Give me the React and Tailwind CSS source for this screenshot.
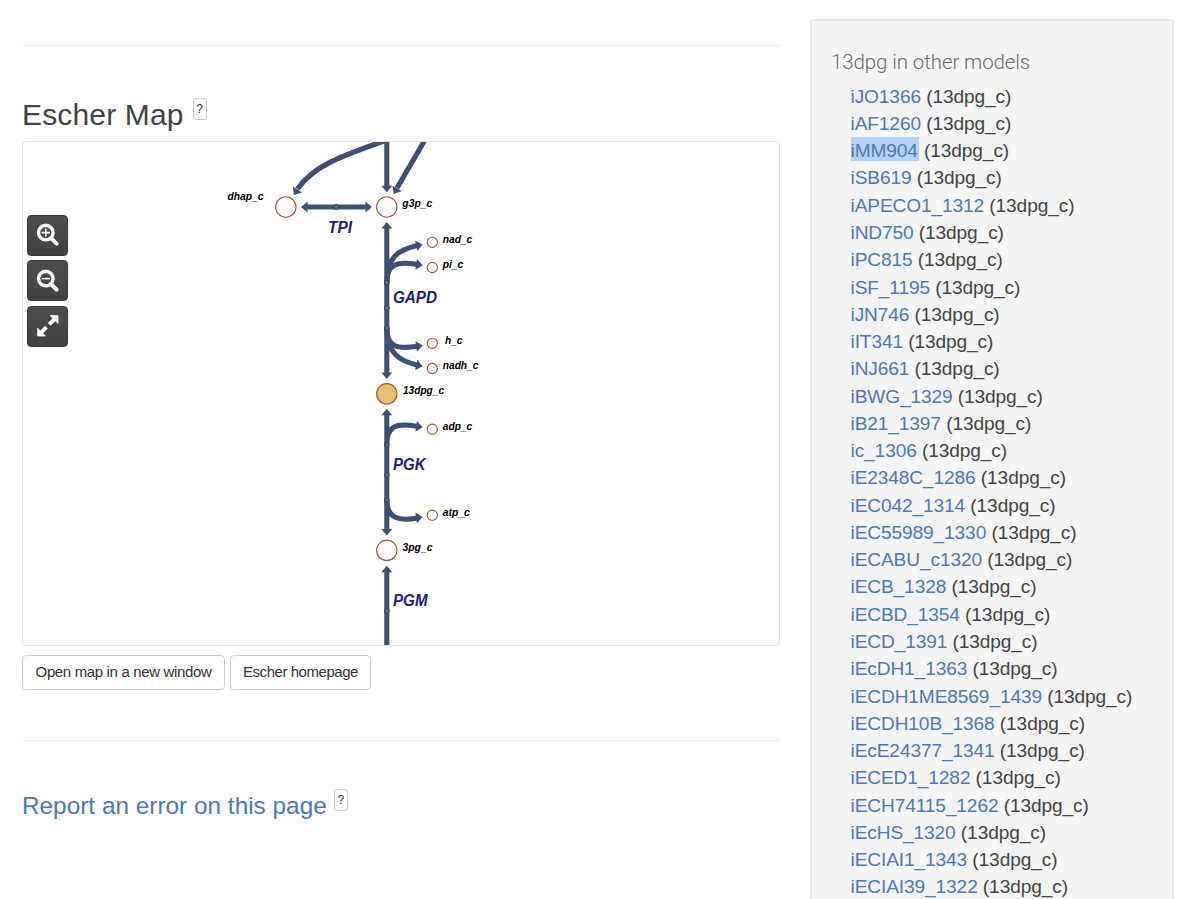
import React from 'react';

const models = [
  'iJO1366', 'iAF1260', 'iMM904', 'iSB619', 'iAPECO1_1312', 'iND750', 'iPC815', 'iSF_1195',
  'iJN746', 'iIT341', 'iNJ661', 'iBWG_1329', 'iB21_1397', 'ic_1306', 'iE2348C_1286',
  'iEC042_1314', 'iEC55989_1330', 'iECABU_c1320', 'iECB_1328', 'iECBD_1354', 'iECD_1391',
  'iEcDH1_1363', 'iECDH1ME8569_1439', 'iECDH10B_1368', 'iEcE24377_1341', 'iECED1_1282',
  'iECH74115_1262', 'iEcHS_1320', 'iECIAI1_1343', 'iECIAI39_1322',
];

const primaryNodes = [
  { x: 285.8, y: 207 },
  { x: 386.8, y: 207 },
  { x: 386.8, y: 393.8, active: true },
  { x: 386.8, y: 550.3 },
];

const secondaryNodes = [[432.3, 242.3], [432.3, 267.5], [432.3, 343.3], [432.3, 368.5], [432.3, 429.2], [432.3, 515.2]];

const markers = [[336.3, 207], [386.8, 282.7], [386.8, 308], [386.8, 328.2], [386.8, 444.5], [386.8, 474.8], [386.8, 500], [386.8, 611]];

// x, y, rotation (0 points right)
const arrows = [
  [294, 194.8, 123], [386.8, 192, 90], [394, 193.8, 120],
  [301.3, 207, 180], [371.7, 207, 0],
  [386.8, 222.3, -90], [422.4, 244.5, -12], [422.4, 265.3, 8],
  [422.4, 345.5, -8], [422.4, 366.3, 12], [386.8, 378.7, 90],
  [386.8, 409, -90], [422.4, 427.3, 8], [422.4, 517, -8], [386.8, 535.3, 90],
  [386.8, 566, -90],
];

const metabolites = [
  ['dhap_c', 227.5, 199.7, 36], ['g3p_c', 402.3, 207.3, 30], ['nad_c', 442.8, 242.8, 29.5], ['pi_c', 442.8, 268, 20.5],
  ['h_c', 445, 343.7, 17.5], ['nadh_c', 442.8, 369, 35.5], ['13dpg_c', 403, 394.3, 41],
  ['adp_c', 442.8, 429.7, 29.5], ['atp_c', 442.8, 515.7, 27], ['3pg_c', 402.5, 550.8, 30],
];

const reactions = [['TPI', 328, 232.8, 24], ['GAPD', 393, 303, 44], ['PGK', 393, 469.7, 32.5], ['PGM', 393, 606.2, 34.5]];

function EscherMap() {
  return (
    <svg className="block h-full w-full" viewBox="23 142 756 503" fontFamily="Liberation Sans, Arial, sans-serif" fontWeight="bold" fontStyle="italic">
      <g fill="none" stroke="#3f4f76" strokeWidth="5.1">
        <path d="M386.8 140C341 156 313 166 297.5 189" />
        <path d="M386.8 138V187M425.5 139L397 188M306 207H367" />
        <path d="M386.8 227V374M386.8 282.7C386.8 257 398 250 417.5 245.5" />
        <path d="M386.8 282.7C386.8 264 397 261 417.5 264.5" />
        <path d="M386.8 328.2C386.8 347 397 349.5 417.5 346.3" />
        <path d="M386.8 328.2C386.8 354 400 361 417.5 365.2" />
        <path d="M386.8 414V531M386.8 444.5C386.8 426 396 422.5 417.5 426.5" />
        <path d="M386.8 500C386.8 518 398 521.5 417.5 518M386.8 571V648" />
      </g>
      <g fill="#3f4f76">
        {arrows.map(([x, y, r], i) => (
          <path key={i} d="M0.3 0L-6.3 -5.4V5.4Z" transform={`translate(${x} ${y}) rotate(${r})`} />
        ))}
      </g>
      <g fill="#5b6783" stroke="#363b49" strokeWidth="1">
        {markers.map(([x, y], i) => <circle key={i} cx={x} cy={y} r="2.4" />)}
      </g>
      <g stroke="#a6562f" strokeWidth="1.1">
        {primaryNodes.map((n, i) => (
          <circle key={i} cx={n.x} cy={n.y} r="10.2" fill={n.active ? '#e4c073' : '#fff'} />
        ))}
        {secondaryNodes.map(([x, y], i) => <circle key={i} cx={x} cy={y} r="5.1" fill="#fff" />)}
      </g>
      <g fontSize="10.1" fill="#000">
        {metabolites.map(([name, x, y, w]) => (
          <text key={name} x={x} y={y} textLength={w} lengthAdjust="spacingAndGlyphs">{name}</text>
        ))}
      </g>
      <g fontSize="15.6" fill="#20207a">
        {reactions.map(([name, x, y, w]) => (
          <text key={name} x={x} y={y} textLength={w} lengthAdjust="spacingAndGlyphs">{name}</text>
        ))}
      </g>
    </svg>
  );
}

function MapButton({ label, children }) {
  return (
    <button aria-label={label} className="flex h-[41px] w-[41px] items-center justify-center rounded-[4px] border border-[#3a3a3a] bg-linear-to-b from-[#4c4d4c] to-[#404140]">
      <svg className="h-6 w-6" viewBox="0 0 24 24" fill="none" stroke="#fff">{children}</svg>
    </button>
  );
}

function Help({ className }) {
  return (
    <span className={`flex h-[22px] w-[14px] items-center justify-center rounded-[3px] border border-[#ccc] bg-white text-[12px] text-[#333] ${className}`}>
      ?
    </span>
  );
}

const App = () => {
  return (
    <div className="flex h-[899px] w-[1200px] overflow-hidden bg-white pl-[22px] font-['Liberation_Sans',Arial,sans-serif] text-[#444]">
      <main className="w-[758px] shrink-0 pt-[45px]">
        <hr className="border-[#eee]" />

        <div className="mt-[51px] flex h-[44px] items-start">
          <h2 className="text-[30px] leading-[36px] tracking-[0.15px]">Escher Map</h2>
          <Help className="ml-[9px] mt-px" />
        </div>

        <div className="relative h-[505px] overflow-hidden rounded-[4px] border border-[#e3e3e3]">
          <EscherMap />
          <div className="absolute left-[4px] top-[72.5px] flex flex-col gap-[4.5px]">
            <MapButton label="Zoom in">
              <circle cx="9.8" cy="9.6" r="7.3" strokeWidth="3.4" />
              <path d="M15.3 15.3L20.6 20.6" strokeWidth="4" strokeLinecap="round" />
              <path d="M5.6 9.6H14M9.8 5.4V13.8" strokeWidth="1.6" />
            </MapButton>
            <MapButton label="Zoom out">
              <circle cx="9.8" cy="9.6" r="7.3" strokeWidth="3.4" />
              <path d="M15.3 15.3L20.6 20.6" strokeWidth="4" strokeLinecap="round" />
              <path d="M5.6 9.6H14" strokeWidth="1.6" />
            </MapButton>
            <MapButton label="Zoom to canvas">
              <path d="M13.2 10.4L18.5 5.1M10.4 13.2L5.1 18.5" strokeWidth="3.8" />
              <path d="M14.2 1.6H22V9.4ZM1.6 14.2V22H9.4Z" fill="#fff" stroke="#fff" strokeWidth="0.8" strokeLinejoin="round" />
            </MapButton>
          </div>
        </div>

        <div className="mt-[9px] flex gap-[5px]">
          <button className="h-[35px] w-[203px] whitespace-nowrap rounded-[4px] border border-[#ccc] text-[15px] tracking-[-0.35px] text-[#333]">Open map in a new window</button>
          <button className="h-[35px] w-[141px] whitespace-nowrap rounded-[4px] border border-[#ccc] text-[15px] tracking-[-0.45px] text-[#333]">Escher homepage</button>
        </div>

        <hr className="mt-[50px] border-[#eee]" />

        <div className="mt-[48px] flex items-start">
          <a href="#report" className="text-[24.3px] leading-[34px] tracking-[0.03px] text-[#4a7ab9]">Report an error on this page</a>
          <Help className="ml-[7px]" />
        </div>
      </main>

      <aside className="ml-[30px] mt-[19px] h-[900px] w-[364px] shrink-0 rounded-[4px] border-2 border-[#e8e8e8] bg-[#f5f5f5] pl-[19px] pt-[27px]">
        <h3 className="font-['Roboto','Liberation_Sans',sans-serif] text-[20.5px] font-light leading-[28px] tracking-[-0.1px] text-[#6c6c6c]">13dpg in other models</h3>
        <ul className="pl-[19.5px] pt-[6.7px] text-[19.1px] leading-[27.27px] tracking-[-0.1px]">
          {models.map((model) => (
            <li key={model} className="whitespace-nowrap">
              <a href={`#${model}`} className={model === 'iMM904' ? 'bg-[#b5d0fb] pr-px pt-[3px] text-[#4a7ab9]' : 'text-[#4a7ab9]'}>{model}</a> (13dpg_c)
            </li>
          ))}
        </ul>
      </aside>
    </div>
  );
};

export default App;
